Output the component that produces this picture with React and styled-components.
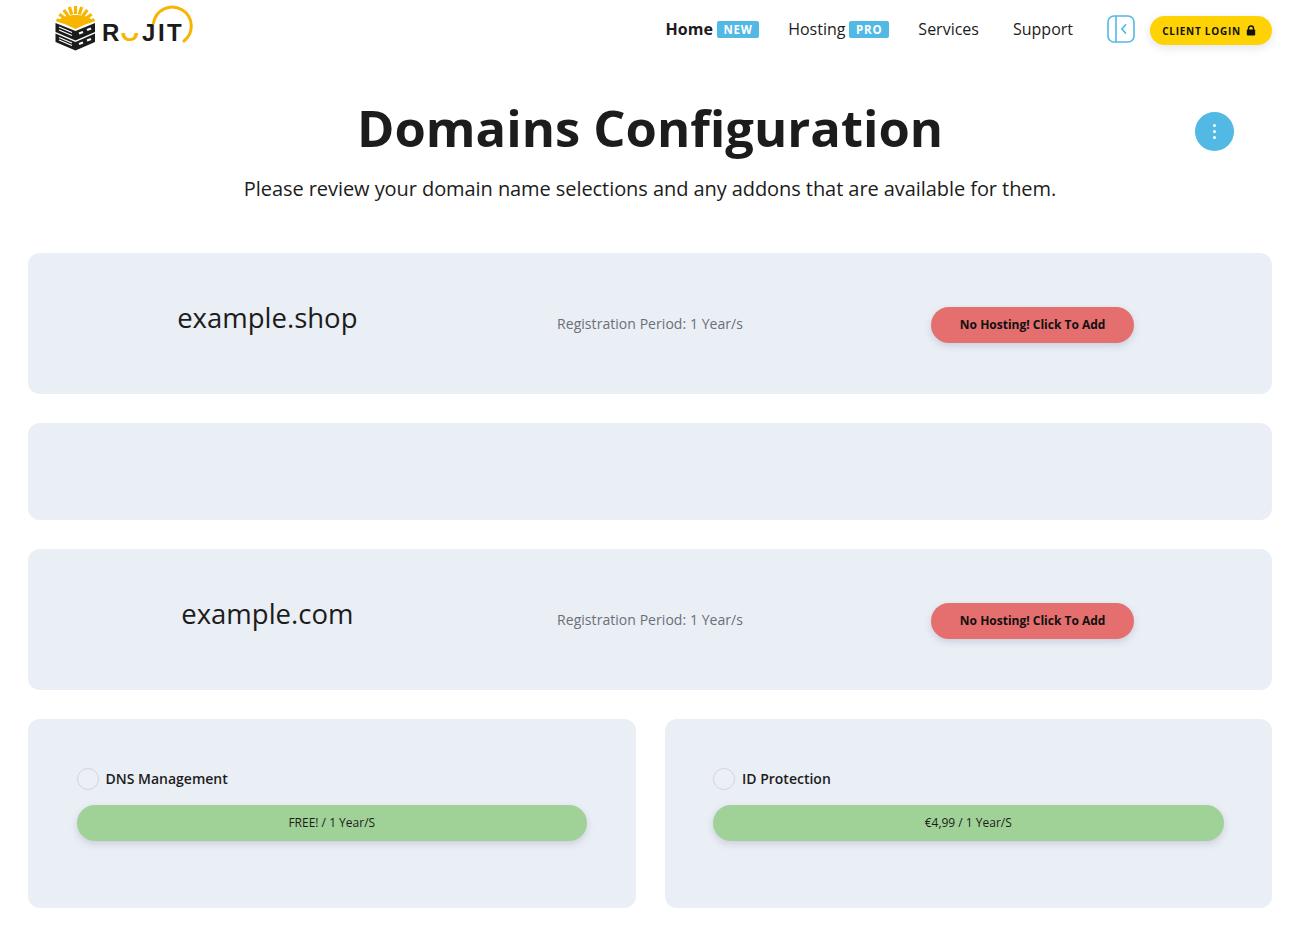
import React from 'react';
import styled, {createGlobalStyle} from 'styled-components';

const GlobalStyle = createGlobalStyle`
  html, body {
    margin: 0;
    padding: 0;
    background: #fff;
    overflow: hidden;
  }
  * { box-sizing: border-box; }
  body {
    font-family: "Open Sans", "Liberation Sans", sans-serif;
    color: #1a1a1a;
  }
`;

const Page = styled.div`
  width: 1300px;
  height: 926px;
  padding: 0 28px;
`;

const Navbar = styled.header`
  height: 58px;
  display: flex;
  align-items: center;
  justify-content: space-between;
  padding-left: 26px;
`;

const NavRight = styled.div`
  display: flex;
  align-items: center;
`;

const NavItem = styled.a`
  display: flex;
  align-items: center;
  gap: 4px;
  margin-right: ${props => props.$gap}px;
  font-size: 16px;
  font-weight: ${props => (props.$active ? 700 : 400)};
  color: #1c1c1c;
`;

const Tag = styled.span`
  background: #52b8e4;
  color: #fff;
  font-size: 11.5px;
  font-weight: 700;
  letter-spacing: 0.8px;
  line-height: 17px;
  height: 17px;
  padding: 0 6.5px;
  border-radius: 2px;
`;

const SideToggle = styled.button`
  width: 28px;
  height: 28px;
  padding: 0;
  border: none;
  background: none;
  margin: 0 15px 0 7px;
  display: flex;
`;

const LoginButton = styled.button`
  width: 122px;
  height: 29px;
  margin-top: 2px;
  padding: 1px 4px 0 0;
  border: none;
  border-radius: 15px;
  background: #ffd204;
  color: #111;
  font-family: inherit;
  font-size: 10px;
  font-weight: 700;
  letter-spacing: 0.75px;
  display: flex;
  align-items: center;
  justify-content: center;
  gap: 5px;
  box-shadow: 0 3px 8px rgba(60, 70, 110, 0.14);
`;

const Hero = styled.section`
  position: relative;
  height: 195px;
  text-align: center;
`;

const Title = styled.h1`
  margin: 0;
  padding-top: 36px;
  font-size: 50.7px;
  line-height: 68px;
  font-weight: 700;
  color: #1c1c1c;
`;

const Subtitle = styled.p`
  margin: 13px 0 0;
  font-size: 20px;
  line-height: 28px;
  letter-spacing: -0.07px;
  color: #1c1c1c;
`;

const MenuDot = styled.button`
  position: absolute;
  top: 54px;
  right: 38px;
  width: 39px;
  height: 39px;
  padding: 0;
  border: none;
  border-radius: 50%;
  background: #52b8e4;
  display: flex;
  flex-direction: column;
  align-items: center;
  justify-content: center;
  gap: 2.5px;

  span {
    width: 3.5px;
    height: 3.5px;
    border-radius: 50%;
    background: #fff;
  }
`;

const Stack = styled.div`
  display: flex;
  flex-direction: column;
  gap: 29px;
`;

const Card = styled.div`
  background: #eaeef5;
  border-radius: 12px;
`;

const DomainCard = styled(Card)`
  height: 141px;
  padding: 0 48px;
  display: grid;
  grid-template-columns: repeat(3, 1fr);
  align-items: center;
  justify-items: center;
`;

const EmptyCard = styled(Card)`
  height: 97px;
`;

const DomainName = styled.div`
  font-size: 27.5px;
  line-height: 38px;
  color: #1c1c1c;
  margin-top: -12px;
`;

const Period = styled.div`
  font-size: 14px;
  line-height: 20px;
  letter-spacing: 0.05px;
  color: #6a6f76;
  margin-top: 1px;
`;

const HostingButton = styled.button`
  width: 203px;
  height: 36px;
  margin-top: 2px;
  padding: 0 0 1px;
  border: none;
  border-radius: 18px;
  background: #e56e6e;
  color: #111;
  font-family: inherit;
  font-size: 12px;
  font-weight: 700;
  box-shadow: 0 3px 7px rgba(90, 100, 140, 0.22);
`;

const AddonRow = styled.div`
  display: grid;
  grid-template-columns: 1fr 1fr;
  gap: 29px;
`;

const AddonCard = styled(Card)`
  height: 189px;
  padding: 49px 48.5px 0;
`;

const AddonLabel = styled.label`
  display: flex;
  align-items: center;
  gap: 7px;
  height: 22px;
  font-size: 14px;
  font-weight: 600;
  color: #1c1c1c;
`;

const AddonName = styled.span`
  margin-top: -2px;
`;

const Radio = styled.span`
  width: 22px;
  height: 22px;
  border-radius: 50%;
  border: 1px solid #d2d5da;
  background: #eceff5;
`;

const PriceBar = styled.div`
  margin-top: 15px;
  height: 36px;
  padding-bottom: 2px;
  border-radius: 18px;
  background: #a0d297;
  color: #1c1c1c;
  font-size: 12px;
  display: flex;
  align-items: center;
  justify-content: center;
  box-shadow: 0 3px 7px rgba(90, 100, 140, 0.22);
`;

const rayAngles = [-72, -54, -36, -18, 0, 18, 36, 54, 72];

const Logo = () => (
  <svg width="142" height="50" viewBox="0 0 142 50">
    <defs>
      <clipPath id="lowerHalf"><rect x="64" y="29" width="24" height="12" /></clipPath>
    </defs>
    <g stroke="#f7b500" strokeWidth="3.2">
      {rayAngles.map(angle => {
        const rad = angle * Math.PI / 180;
        return (
          <line
            key={angle}
            x1={21.5 + 12 * Math.sin(rad)}
            y1={22 - 12 * Math.cos(rad)}
            x2={21.5 + 20 * Math.sin(rad)}
            y2={22 - 20 * Math.cos(rad)}
          />
        );
      })}
    </g>
    <path d="M4 17 C10 9 33 9 39 17 L21.5 25 Z" fill="#f7b500" />
    <path d="M1.5 19 L21.5 27 L41 19 V28 L21.5 36.5 L1.5 28 Z" fill="#1b1b1b" />
    <path d="M1.5 29.5 L21.5 38 L41 29.5 V38 L21.5 46.5 L1.5 38 Z" fill="#1b1b1b" />
    <path d="M5 23 L18 28.5 M5 26 L18 31.5 M5 33.5 L18 39 M5 36 L18 41.5" stroke="#fff" strokeWidth="1.1" />
    <path d="M25 29.5 L29 28 M33 26 L37 24.5 M25 40 L29 38.5 M33 36.5 L37 35" stroke="#fff" strokeWidth="2.2" />
    <g fontFamily="'Liberation Sans', sans-serif" fontWeight="700" fontSize="24" fill="#1b1b1b">
      <text x="48" y="37">R</text>
      <text x="66.5" y="37" fill="#f7b500" clipPath="url(#lowerHalf)">O</text>
      <text x="88" y="37">J</text>
      <text x="104" y="37">I</text>
      <text x="113" y="37">T</text>
    </g>
    <path d="M99.5 19 A19 19 0 1 1 130 37" fill="none" stroke="#f7b500" strokeWidth="3" strokeLinecap="round" />
  </svg>
);

const ToggleIcon = () => (
  <svg width="28" height="28" viewBox="0 0 28 28" fill="none" stroke="#52b8e4" strokeWidth="1.6">
    <rect x="1" y="1" width="26" height="26" rx="6" />
    <path d="M9 1 V27" />
    <path d="M18.5 10 L14.8 14 L18.5 18" strokeLinecap="round" strokeLinejoin="round" strokeWidth="1.8" />
  </svg>
);

const LockIcon = () => (
  <svg width="10" height="11" viewBox="0 0 10 11">
    <path d="M2.5 5 V3.2 C2.5 0.2 7.5 0.2 7.5 3.2 V5" fill="none" stroke="#111" strokeWidth="1.4" />
    <rect x="0.8" y="4.6" width="8.4" height="6" rx="1" fill="#111" />
  </svg>
);

const domains = ['example.shop', null, 'example.com'];
const addons = [
  {name: 'DNS Management', price: 'FREE! / 1 Year/S'},
  {name: 'ID Protection', price: '€4,99 / 1 Year/S'},
];

export default function App() {
  return (
    <Page>
      <GlobalStyle />
      <Navbar>
        <Logo />
        <NavRight>
          <NavItem $active $gap={29}>Home <Tag>NEW</Tag></NavItem>
          <NavItem $gap={29.5}>Hosting <Tag>PRO</Tag></NavItem>
          <NavItem $gap={34}>Services</NavItem>
          <NavItem $gap={27}>Support</NavItem>
          <SideToggle><ToggleIcon /></SideToggle>
          <LoginButton>CLIENT LOGIN <LockIcon /></LoginButton>
        </NavRight>
      </Navbar>
      <Hero>
        <Title>Domains Configuration</Title>
        <Subtitle>Please review your domain name selections and any addons that are available for them.</Subtitle>
        <MenuDot><span /><span /><span /></MenuDot>
      </Hero>
      <Stack>
        {domains.map((domain, i) => domain ? (
          <DomainCard key={i}>
            <DomainName>{domain}</DomainName>
            <Period>Registration Period: 1 Year/s</Period>
            <HostingButton>No Hosting! Click To Add</HostingButton>
          </DomainCard>
        ) : <EmptyCard key={i} />)}
        <AddonRow>
          {addons.map(addon => (
            <AddonCard key={addon.name}>
              <AddonLabel><Radio /><AddonName>{addon.name}</AddonName></AddonLabel>
              <PriceBar>{addon.price}</PriceBar>
            </AddonCard>
          ))}
        </AddonRow>
      </Stack>
    </Page>
  );
}
